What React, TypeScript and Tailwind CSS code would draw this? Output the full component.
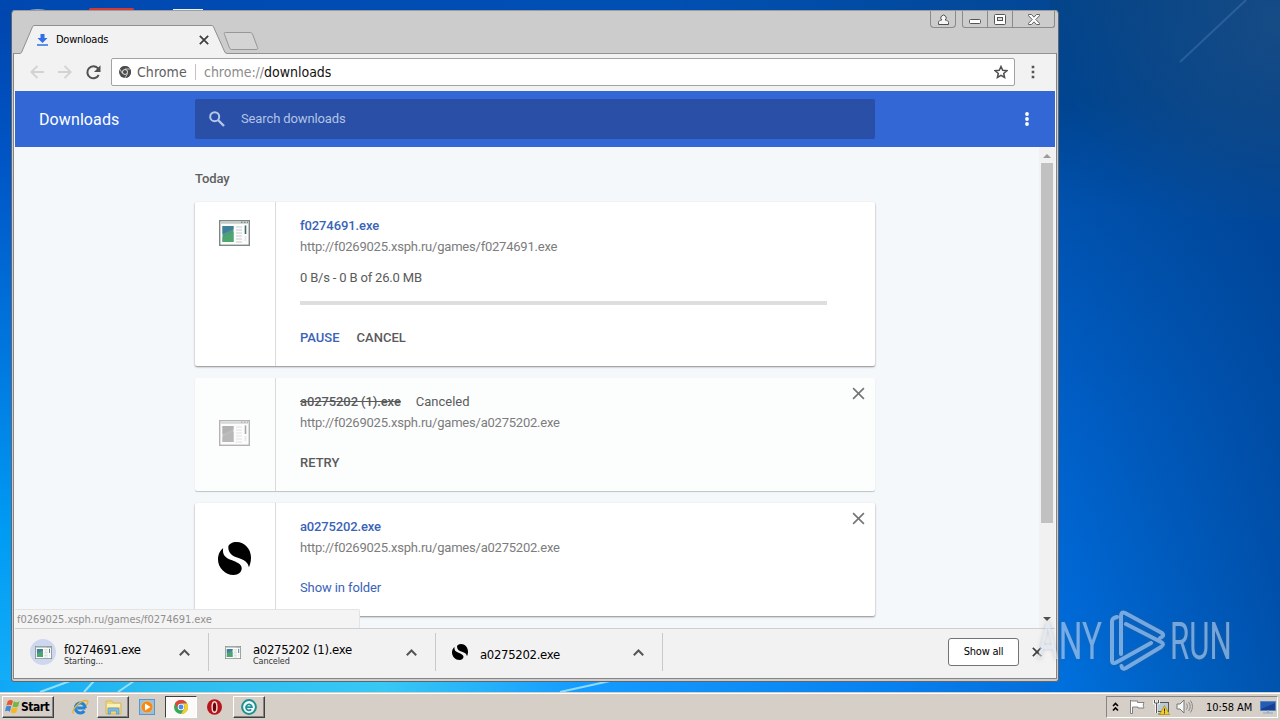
import type { ReactNode } from "react";

const ui = "font-['DejaVu_Sans_Condensed','DejaVu_Sans',sans-serif]";

function AppIcon({ w, h, gray }: { w: number; h: number; gray?: boolean }) {
  const edge = gray ? "#b3b3b3" : "#7f8683";
  return (
    <svg width={w} height={h} viewBox="0 0 31 26" preserveAspectRatio="none">
      <rect x=".7" y=".7" width="29.6" height="24.6" fill="#fbfcfb" stroke={edge} strokeWidth="1.4" />
      <path d="M1.4 2.8h28" stroke={gray ? "#d8d8d8" : "#c2cbc8"} strokeWidth="2" />
      <path d="M22 2.2h1.4M25 2.2h1.4M28 2.2h1" stroke={edge} strokeWidth="1.4" />
      <rect x="3.5" y="6" width="11" height="16" fill={gray ? "#bcbcbc" : "#4d9a86"} />
      <path d="M3.5 6h11v3L3.5 14z" fill={gray ? "#b2b2b2" : "#3f7f9a"} />
      <path d="M3.5 17l11-5v10h-11z" fill={gray ? "#b8b8b8" : "#4ea56e"} />
      <path d="M17 7h6M17 10h6M17 13h6M17 16h6M17 19h6M17 22h6" stroke={gray ? "#e2e2e2" : "#c6cac8"} strokeWidth="1" />
      <path d="M26.5 5.5v8.5" stroke={gray ? "#a8a8a8" : "#3c6b68"} strokeWidth="1.6" />
      <path d="M26.5 16v5" stroke="#e5e8e7" strokeWidth="1.6" />
    </svg>
  );
}

function SIcon({ size }: { size: number }) {
  return (
    <svg width={size} height={size} viewBox="0 0 32 32">
      <path d="M10 5C10 2 14 0 18 0C26 0 32 7 32 15C32 19 31 22 30 24.500C29 19.500 25 17 20 15.500C14 13.500 10 11 10 5z" fill="#000" />
      <path d="M5 6C2 8 0 12 0 17C0 25 7 32 15 32C20 32 23 29 23 25.500C23 21.500 18 19.500 13 17.500C7 15.500 4 12 5 6z" fill="#000" />
    </svg>
  );
}

function Cross({ size, color, width }: { size: number; color: string; width: number }) {
  return (
    <svg width={size} height={size} viewBox="0 0 12 12">
      <path d="M1 1l10 10M11 1L1 11" stroke={color} strokeWidth={width} fill="none" />
    </svg>
  );
}

function ChromeMark({ size, mono }: { size: number; mono?: boolean }) {
  const c = mono ? ["#4c4c4c", "#4c4c4c", "#4c4c4c", "#4c4c4c"] : ["#e2423a", "#f7cd2e", "#3aa757", "#4a88ef"];
  return (
    <svg width={size} height={size} viewBox="0 0 24 24">
      <circle cx="12" cy="12" r="12" fill={c[2]} />
      <path d="M1.6 6A12 12 0 0 1 22.4 6H12a6 6 0 0 0-5.2 9z" fill={c[0]} />
      <path d="M22.4 6A12 12 0 0 1 12 24l5.2-9A6 6 0 0 0 12 6z" fill={c[1]} />
      {mono && <path d="M12 6h10.8M6.8 15L1.4 5.8M17.2 15L12 24" stroke="#fff" strokeWidth="1.3" />}
      <circle cx="12" cy="12" r="5.6" fill="#fff" />
      <circle cx="12" cy="12" r="4.2" fill={c[3]} />
    </svg>
  );
}

function TitleBar() {
  return (
    <div className="flex h-[41px] shrink-0 items-start">
      <div className="relative ml-[8px] mt-[13px] h-[29px] w-[207px]">
        <svg className="absolute left-0 top-0" width="207" height="30" viewBox="0 0 207 30">
          <path d="M0 28.500L1.500 27.500L12 3C12.500 1 13 .5 15 .5H191C193 .5 193.500 1 194 3L205 27.500L207 28.500V30H0z" fill="#f2f2f2" />
          <path d="M0 28.500L1.500 27.500L12 3C12.500 1 13 .5 15 .5H191C193 .5 193.500 1 194 3L205 27.500L207 28.500" fill="none" stroke="#8f8f8f" />
        </svg>
        <div className="relative flex h-full items-center pl-[17px]">
          <svg width="11" height="12" viewBox="0 0 11 12">
            <path d="M3.500 0h4v4h3L5.500 9 .5 4h3z" fill="#2f6fe8" />
            <path d="M0 11h11" stroke="#2f6fe8" strokeWidth="1.500" />
          </svg>
          <span className="ml-[8px] w-[143px] text-[11px] leading-[14px] tracking-[-0.25px] text-black">Downloads</span>
          <Cross size={10} color="#3e3e3e" width={2.100} />
        </div>
      </div>
      <svg className="-ml-[4px] mt-[20px]" width="36" height="19" viewBox="0 0 36 19">
        <path d="M2.500 .5H27C28 .5 29 1 29.500 2L34.500 15.500C35 17 34.500 17.500 33 17.500H9C8 17.500 7 17 6.500 16L1.500 2.500C1 1 1 .5 2.500 .5z" fill="#d4d4d4" stroke="#979797" />
      </svg>
      <div className="-mt-px ml-auto mr-[3px] flex">
        <div className="mr-[6px] flex h-[17px] w-[26px] items-center justify-center rounded-b-[4px] border border-t-0 border-[#8b8b8b]">
          <svg width="11" height="11" viewBox="0 0 11 11">
            <path d="M.5 10.500V8.500C.5 7 2 6.300 3.800 6A2.700 2.700 0 1 1 7.200 6C9 6.300 10.500 7 10.500 8.500v2z" fill="#f6f6f6" stroke="#505050" />
          </svg>
        </div>
        <div className="flex h-[17px] w-[93px] rounded-b-[3px] border border-t-0 border-[#8b8b8b]">
          <div className="flex w-[25px] items-end justify-center border-r border-[#8b8b8b] pb-[3px]">
            <svg width="12" height="5" viewBox="0 0 12 5"><rect x=".5" y=".5" width="11" height="4" rx="1" fill="#fff" stroke="#555" /></svg>
          </div>
          <div className="flex w-[25px] items-center justify-center border-r border-[#8b8b8b]">
            <svg width="12" height="11" viewBox="0 0 12 11"><rect x=".5" y=".5" width="11" height="10" rx="1" fill="#fff" stroke="#555" /><rect x="3.500" y="3.500" width="5" height="3" fill="#ddd" stroke="#555" /></svg>
          </div>
          <div className="flex flex-1 items-center justify-center">
            <svg width="12" height="11" viewBox="0 0 12 11"><path d="M.5 .5h3L6 3.200 8.500 .5h3v1.200L7.800 5.500l3.700 3.800v1.200h-3L6 7.800 3.500 10.500h-3V9.300L4.200 5.500.5 1.700z" fill="#fff" stroke="#555" strokeWidth=".9" /></svg>
          </div>
        </div>
      </div>
    </div>
  );
}

function Toolbar() {
  return (
    <div className="flex h-[38px] shrink-0 items-center border-t border-[#929292] bg-[#f2f2f2] pb-[2px] pl-[16px]">
      <svg width="14" height="14" viewBox="0 0 14 14"><path d="M14 7H1.500M7.500 .8L1.300 7l6.200 6.200" fill="none" stroke="#d2d2d2" strokeWidth="1.800" /></svg>
      <svg className="ml-[14px]" width="14" height="14" viewBox="0 0 14 14"><path d="M0 7h12.500M6.500 .8L12.700 7l-6.200 6.200" fill="none" stroke="#d2d2d2" strokeWidth="1.800" /></svg>
      <svg className="ml-[14px] mt-px" width="15" height="15" viewBox="0 0 15 15"><path d="M12.700 10A6 6 0 1 1 11.800 3.200L13 4.500" fill="none" stroke="#505050" strokeWidth="2" /><path d="M14.500 .3V7H8z" fill="#505050" /></svg>
      <div className="ml-[10px] flex h-[28px] w-[904px] items-center rounded-[2px] border border-[#a2a2a2] bg-white pl-[7px] pr-[6px]">
        <ChromeMark size={12} mono />
        <span className="ml-[6px] w-[50px] text-[14px] leading-[18px] tracking-[0.06px] text-[#5e5e5e]">Chrome</span>
        <span className="ml-[8px] h-[16px] w-px bg-[#c4c4c4]" />
        <span className="ml-[8px] text-[14px] leading-[18px] tracking-[-0.02px] text-[#8c8c8c]">chrome://<span className="text-[#111]">downloads</span></span>
        <svg className="ml-auto" width="14" height="14" viewBox="0 0 14 14"><path d="M7 1.500l1.700 3.800 4.100.4-3.100 2.700.9 4.100L7 10.400l-3.600 2.100.9-4.100L1.200 5.700l4.100-.4z" fill="none" stroke="#4f4f4f" strokeWidth="1.500" /></svg>
      </div>
      <svg className="ml-[16px]" width="4" height="14" viewBox="0 0 4 14"><path d="M.7 .7h2.600v2.600H.7zM.7 5.700h2.600v2.600H.7zM.7 10.700h2.600v2.600H.7z" fill="#555" /></svg>
    </div>
  );
}

function Header() {
  return (
    <div className="flex h-[56px] shrink-0 items-center bg-[#3367d6] pl-[24px] font-[Roboto,sans-serif]">
      <h1 className="w-[156px] pt-[2px] text-[16px] leading-[20px] tracking-[0.1px] text-white">Downloads</h1>
      <div className="flex h-[40px] w-[680px] items-center rounded-[2px] bg-[#294fa7] pl-[14px]">
        <svg width="16" height="16" viewBox="0 0 16 16"><circle cx="5.700" cy="5.700" r="4.500" fill="none" stroke="#b6c6ea" strokeWidth="2" /><path d="M9 9l6 6" stroke="#b6c6ea" strokeWidth="2.400" /></svg>
        <span className="ml-[16px] text-[13px] leading-[18px] tracking-[-0.12px] text-[#b3c3e6]">Search downloads</span>
      </div>
      <svg className="ml-[150px]" width="4" height="14" viewBox="0 0 4 14"><circle cx="2" cy="2" r="1.900" fill="#fff" /><circle cx="2" cy="7" r="1.900" fill="#fff" /><circle cx="2" cy="12" r="1.900" fill="#fff" /></svg>
    </div>
  );
}

function Card({ icon, top, faded, close, children }: { icon: ReactNode; top?: boolean; faded?: boolean; close?: boolean; children: ReactNode }) {
  return (
    <section
      className={
        "relative mb-[12px] flex shrink-0 rounded-[2px] " +
        (top ? "h-[164px] " : "h-[113px] ") +
        (faded ? "bg-[#fcfefe] shadow-[0_1px_1px_rgba(0,0,0,0.22)]" : "bg-white shadow-[0_1px_2px_rgba(0,0,0,0.45)]")
      }
    >
      <div className={"flex w-[81px] shrink-0 justify-center border-r border-[#dadada] pr-[2px] " + (top ? "pt-[18px]" : "items-center pb-[4px]")}>{icon}</div>
      <div className="flex flex-col pl-[24px] pt-[14px] text-[13px] leading-[20px] text-[#5a5a5a]">{children}</div>
      {close && (
        <button className="absolute right-[10px] top-[9px]" aria-label="Remove">
          <Cross size={13} color="#757575" width={1.500} />
        </button>
      )}
    </section>
  );
}

function Url({ children }: { children: string }) {
  return <span className="h-[22px] leading-[22px] tracking-[-0.22px] text-[#7c7c7c]">{children}</span>;
}

function Page() {
  return (
    <div className="relative flex h-[481px] shrink-0 overflow-hidden bg-[#f5f8fb] font-[Roboto,sans-serif]">
      <main className="ml-[180px] flex w-[680px] flex-col">
        <h2 className="mb-[13px] mt-[22px] h-[20px] text-[13px] font-medium leading-[20px] tracking-[-0.1px] text-[#606060]">Today</h2>
        <Card top icon={<AppIcon w={31} h={26} />}>
          <a className="font-medium tracking-[-0.1px] text-[#3a63b8]">f0274691.exe</a>
          <Url>http://f0269025.xsph.ru/games/f0274691.exe</Url>
          <span className="mt-[10px] tracking-[-0.18px]">0 B/s - 0 B of 26.0 MB</span>
          <span className="mt-[13px] h-[4px] w-[527px] bg-[#dedede]" />
          <span className="mt-[23px] flex gap-[17px] font-medium">
            <span className="text-[#3a63b8]">PAUSE</span>
            <span>CANCEL</span>
          </span>
        </Card>
        <Card faded close icon={<AppIcon w={31} h={26} gray />}>
          <span className="flex gap-[15px]">
            <span className="font-medium tracking-[-0.1px] line-through">a0275202 (1).exe</span>
            <span>Canceled</span>
          </span>
          <Url>http://f0269025.xsph.ru/games/a0275202.exe</Url>
          <span className="mt-[19px] font-medium">RETRY</span>
        </Card>
        <Card close icon={<span className="pl-px pt-px"><SIcon size={33} /></span>}>
          <a className="font-medium tracking-[-0.15px] text-[#3a63b8]">a0275202.exe</a>
          <Url>http://f0269025.xsph.ru/games/a0275202.exe</Url>
          <a className="mt-[19px] tracking-[-0.1px] text-[#3a63b8]">Show in folder</a>
        </Card>
      </main>
      <div className="ml-auto flex w-[16px] flex-col items-center bg-[#f1f1f1]">
        <svg className="mt-[7px]" width="8" height="4" viewBox="0 0 8 4"><path d="M0 4l4-4 4 4z" fill="#9a9a9a" /></svg>
        <div className="mt-[5px] h-[360px] w-[12px] bg-[#c1c1c1]" />
        <svg className="mb-[7px] mt-auto" width="8" height="4" viewBox="0 0 8 4"><path d="M0 0l4 4 4-4z" fill="#505050" /></svg>
      </div>
      <div className="absolute bottom-0 left-0 flex h-[19px] w-[345px] items-center rounded-tr-[2px] border-r border-t border-[#e4e4e4] bg-[#f4f4f4] pl-[2px] pt-px">
        <span className="font-['DejaVu_Sans_Condensed','DejaVu_Sans',sans-serif] text-[11px] leading-[16px] tracking-[-0.03px] text-[#909090]">f0269025.xsph.ru/games/f0274691.exe</span>
      </div>
    </div>
  );
}

function ShelfItem({ icon, name, status, className }: { icon: ReactNode; name: string; status?: string; className: string }) {
  return (
    <div className={"flex h-[38px] items-center border-r border-[#cacaca] pr-[18px] " + className}>
      {icon}
      <div className={"flex flex-col " + (status ? "pt-[4px]" : "pt-[4px]")}>
        <span className="text-[13px] leading-[13px] tracking-[-0.32px] text-black">{name}</span>
        {status && <span className="text-[9px] leading-[10px] tracking-[-0.1px] text-[#333]">{status}</span>}
      </div>
      <svg className="ml-auto" width="11" height="7" viewBox="0 0 11 7"><path d="M.8 6.200L5.500 1.500l4.700 4.700" fill="none" stroke="#555" strokeWidth="2" /></svg>
    </div>
  );
}

function Shelf() {
  return (
    <div className="flex h-[50px] shrink-0 items-center border-t border-[#cfcfcf] bg-[#f2f2f2] pb-[3px]">
      <ShelfItem
        className="w-[194px] pl-[15px]"
        name="f0274691.exe"
        status="Starting..."
        icon={<span className="mr-[8px] flex h-[26px] w-[26px] items-center justify-center rounded-full bg-[#cdd8f0]"><AppIcon w={17} h={13} /></span>}
      />
      <ShelfItem className="w-[227px] pl-[16px]" name="a0275202 (1).exe" status="Canceled" icon={<span className="mr-[12px]"><AppIcon w={16} h={13} /></span>} />
      <ShelfItem className="w-[227px] pl-[16px]" name="a0275202.exe" icon={<span className="mr-[12px]"><SIcon size={16} /></span>} />
      <button className="ml-auto mr-[13px] flex h-[28px] w-[71px] items-center justify-center rounded-[3px] border border-[#737373] bg-white pt-px text-[11px] tracking-[-0.25px] text-black">Show all</button>
      <span className="mr-[13px]"><Cross size={10} color="#3e3e3e" width={2} /></span>
    </div>
  );
}

function Browser() {
  return (
    <div className="absolute left-[11px] top-[10px] flex h-[672px] w-[1048px] flex-col overflow-hidden rounded-t-[4px] rounded-b-[3px] border border-[#5f6670] border-t-[#9c9c9c] bg-[#cccccc] pt-px">
      <TitleBar />
      <div className="mx-px flex flex-col border-x border-b border-[#858585] bg-[#f7f7f7]">
        <Toolbar />
        <div className="mx-px flex flex-col">
          <Header />
          <Page />
          <Shelf />
        </div>
      </div>
    </div>
  );
}

function Wallpaper() {
  return (
    <svg className="absolute inset-0" width="1280" height="720" viewBox="0 0 1280 720">
      <defs>
        <linearGradient id="top" x1="0" x2="1">
          <stop offset="0" stopColor="#0048b0" /><stop offset=".5" stopColor="#0050b4" /><stop offset=".83" stopColor="#034795" /><stop offset="1" stopColor="#0f4781" />
        </linearGradient>
        <linearGradient id="left" x1="0" y1="0" x2="0" y2="1">
          <stop offset="0" stopColor="#0046ae" /><stop offset=".2" stopColor="#0054c4" /><stop offset=".5" stopColor="#0078e0" /><stop offset=".75" stopColor="#009cf4" /><stop offset="1" stopColor="#18b0f8" />
        </linearGradient>
        <linearGradient id="base" x1="0" x2="1">
          <stop offset="0" stopColor="#10a8f6" /><stop offset=".12" stopColor="#2cbcf0" /><stop offset=".3" stopColor="#38c8f4" /><stop offset=".45" stopColor="#159cff" /><stop offset=".7" stopColor="#0780f0" /><stop offset="1" stopColor="#0052b4" />
        </linearGradient>
        <linearGradient id="right" x1="0" y1="0" x2="0" y2="1">
          <stop offset="0" stopColor="#03448a" /><stop offset=".15" stopColor="#004592" /><stop offset=".3" stopColor="#0052b0" /><stop offset=".6" stopColor="#0060ca" /><stop offset=".9" stopColor="#006cdc" /><stop offset="1" stopColor="#0072e0" />
        </linearGradient>
        <linearGradient id="shade" x1="0" x2="1"><stop offset="0" stopColor="#003a78" stopOpacity="0" /><stop offset="1" stopColor="#003a84" stopOpacity=".55" /></linearGradient>
        <radialGradient id="corner" cx="1" cy=".1" r="1"><stop offset="0" stopColor="#1b4f85" stopOpacity=".8" /><stop offset="1" stopColor="#1b4f85" stopOpacity="0" /></radialGradient>
      </defs>
      <rect width="1280" height="720" fill="url(#top)" />
      <rect y="11" width="30" height="700" fill="url(#left)" />
      <rect y="680" width="1280" height="40" fill="url(#base)" />
      <rect x="1050" width="230" height="692" fill="url(#right)" />
      <rect x="1050" width="230" height="692" fill="url(#shade)" />
      <rect x="1050" width="230" height="220" fill="url(#corner)" />
      <path d="M1180 62L1246 0" stroke="#5b8abb" strokeOpacity=".35" strokeWidth="2" />
      <path d="M40 692l30-11M84 692l10-11M118 692l16-11M560 692l50-11" stroke="#c8f4f8" strokeOpacity=".7" strokeWidth="2" />
      <path d="M26 11q12-4 23 0z" fill="#8fa6cc" />
      <path d="M89 11V9q0-1 2-1h41q2 0 2 1v2z" fill="#d43a35" />
      <path d="M173 11V9h30v2z" fill="#e9f3f3" />
    </svg>
  );
}

function Watermark() {
  return (
    <div className="absolute left-[1037px] top-[609px] flex h-[66px] w-[200px] items-center font-[Roboto,sans-serif] text-[52px] leading-[66px] text-[#d5e3f4] opacity-55 drop-shadow-[0_0_2px_rgba(90,90,90,0.5)]">
      <span className="w-[70px]"><span className="inline-block origin-left scale-x-[0.64]">ANY</span></span>
      <svg className="-mt-[3px] shrink-0" width="60" height="62" viewBox="0 0 60 62">
        <path d="M10 7L7 8Q5 9 5 12V50Q5 55 10 52L44 33M14 44V6Q14 1 18 3L55 23Q58 26 53 28M19 14L54 32Q58 34 54 37L19 58Q15 60 14.500 56" fill="none" stroke="currentColor" strokeWidth="4" strokeLinecap="round" strokeLinejoin="round" />
      </svg>
      <span className="ml-[3px] w-[62px]"><span className="inline-block origin-left scale-x-[0.6]">RUN</span></span>
    </div>
  );
}

function TaskButton({ pressed, children }: { pressed?: boolean; children: ReactNode }) {
  return (
    <div
      className={
        "flex h-[22px] w-[32px] items-center justify-center border " +
        (pressed
          ? "border-[#404040] border-b-white border-r-white bg-[#fbfaf8]"
          : "border-white border-b-[#404040] border-r-[#404040] bg-[#d6cfc8] shadow-[inset_-1px_-1px_0_#858585]")
      }
    >
      {children}
    </div>
  );
}

function Taskbar() {
  return (
    <div className="relative mt-auto flex h-[28px] items-center border-t border-[#d4d0c8] bg-[#d6cfc8] pl-[2px] pr-[2px] shadow-[inset_0_1px_0_#fff]">
      <div className="flex h-[22px] w-[52px] items-center border border-white border-b-[#404040] border-r-[#404040] pl-[2px] shadow-[inset_-1px_-1px_0_#858585]">
        <svg width="15" height="15" viewBox="0 0 16 16">
          <path d="M3 2q3-2 5.500 0L7 7Q4.500 5.500 1.500 7z" fill="#e6582b" />
          <path d="M9.300 2.500q3 1.800 6.200 0L14 8q-3 1.500-6 0z" fill="#74b843" />
          <path d="M1.200 8q3-1.500 5.500 0L5.200 13.500Q3 12 0 13z" fill="#4489d6" />
          <path d="M7.500 8.800q3 1.600 6.200 0L12 14.500q-3 1.600-6 0z" fill="#f3b927" />
        </svg>
        <span className="ml-px text-[12px] font-bold leading-[14px] tracking-[-0.5px] text-black">Start</span>
      </div>
      <svg className="ml-[18px]" width="17" height="16" viewBox="0 0 17 16">
        <path d="M13.500 9H5.200M13.300 9A5 5 0 1 0 12.300 12" fill="none" stroke="#2583d4" strokeWidth="3" />
        <path d="M1.500 14.500C-1 11 8 1.500 14 1.500c3 0 2 3 0 5" fill="none" stroke="#e2b53a" strokeWidth="1.300" />
      </svg>
      <div className="ml-[8px]">
        <TaskButton>
          <svg width="17" height="16" viewBox="0 0 17 16">
            <path d="M1 2h6l1 2h8v11H1z" fill="#f0d878" stroke="#d6b350" strokeWidth=".8" />
            <path d="M2 5h13v3H2z" fill="#fbf0b8" />
            <path d="M3 15V10q0-1 1-1h9q1 0 1 1v5h-2.500v-3h-6v3z" fill="#7bbbe5" stroke="#4f91c4" strokeWidth=".6" />
          </svg>
        </TaskButton>
      </div>
      <svg className="ml-[10px]" width="16" height="16" viewBox="0 0 16 16">
        <rect x=".5" y=".5" width="15" height="15" fill="#8fc2e8" stroke="#5f94c4" />
        <circle cx="8" cy="8" r="6" fill="#f28a1c" stroke="#f9cf8e" strokeWidth=".6" /><path d="M6 4.500L11.500 8 6 11.500z" fill="#fff" />
      </svg>
      <div className="ml-[10px]"><TaskButton pressed><ChromeMark size={14} /></TaskButton></div>
      <svg className="ml-[10px]" width="15" height="16" viewBox="0 0 15 16"><ellipse cx="7.500" cy="8" rx="7.500" ry="7.800" fill="#b8151b" /><ellipse cx="7.500" cy="8" rx="2.400" ry="5.300" fill="#6b0508" stroke="#f2dcdc" strokeWidth="1.400" /></svg>
      <div className="ml-[11px]">
        <TaskButton>
          <svg width="16" height="16" viewBox="0 0 16 16"><circle cx="8" cy="8" r="6.900" fill="#f4fcfb" stroke="#1c8f92" strokeWidth="2" /><path d="M5 8.200h6A3 3 0 1 0 10.200 10.400" fill="none" stroke="#1c8f92" strokeWidth="1.700" /></svg>
        </TaskButton>
      </div>
      <div className="ml-auto flex h-[22px] w-[172px] items-center border border-[#858585] border-b-white border-r-white pl-[5px]">
        <svg width="7" height="10" viewBox="0 0 7 10"><path d="M1 4l2.500-2.500L6 4M1 8.500L3.500 6 6 8.500" fill="none" stroke="#000" strokeWidth="1.600" /></svg>
        <svg className="ml-[10px]" width="17" height="15" viewBox="0 0 17 15"><path d="M2.500 2h6v1.500h6.500c-1 2-1 3 0 5.500H9V8H3.500v6.500h-2V1z" fill="#fff" stroke="#777" strokeWidth=".9" /></svg>
        <svg className="ml-[7px]" width="17" height="16" viewBox="0 0 17 16">
          <rect x="4.500" y="3.500" width="11" height="9" fill="#b9cad6" stroke="#555" /><path d="M5 15h7" stroke="#666" />
          <path d="M1.500 1v3h4V1M3.500 4v10" fill="none" stroke="#fff" strokeWidth="2.600" /><path d="M1.500 1v3h4V1M3.500 4v10" fill="none" stroke="#555" />
          <path d="M11.500 6.500l5 9h-10z" fill="#f4ce28" stroke="#a98a12" strokeWidth=".7" /><path d="M11.500 9.500v3M11.500 13.300v1.200" stroke="#222" />
        </svg>
        <svg className="ml-[6px]" width="17" height="15" viewBox="0 0 17 15"><path d="M1 5h3l4-4v13l-4-4H1z" fill="#f7f7f7" stroke="#777" /><path d="M10.500 4.500q2 3 0 6M12.500 3q3.500 4.500 0 9M14.500 1.500q4 6 0 12" fill="none" stroke="#888" /></svg>
        <span className="ml-[13px] w-[48px] whitespace-nowrap pt-[2px] text-[11px] leading-[14px] tracking-[-0.1px] text-black">10:58 AM</span>
        <svg className="ml-[6px] mt-[2px]" width="16" height="13" viewBox="0 0 16 13"><path d="M.5 .5h15v9h-15z" fill="#245cb5" stroke="#5483bd" /><path d="M1 8L15 2v7H1z" fill="#183f91" /><path d="M3 12h10M8 9v3" stroke="#84a8cc" strokeWidth="1.200" /></svg>
      </div>
    </div>
  );
}

export default function App() {
  return (
    <div className={"relative flex h-[720px] w-[1280px] flex-col overflow-hidden bg-[#0050b4] " + ui}>
      <Wallpaper />
      <Browser />
      <Watermark />
      <Taskbar />
    </div>
  );
}
